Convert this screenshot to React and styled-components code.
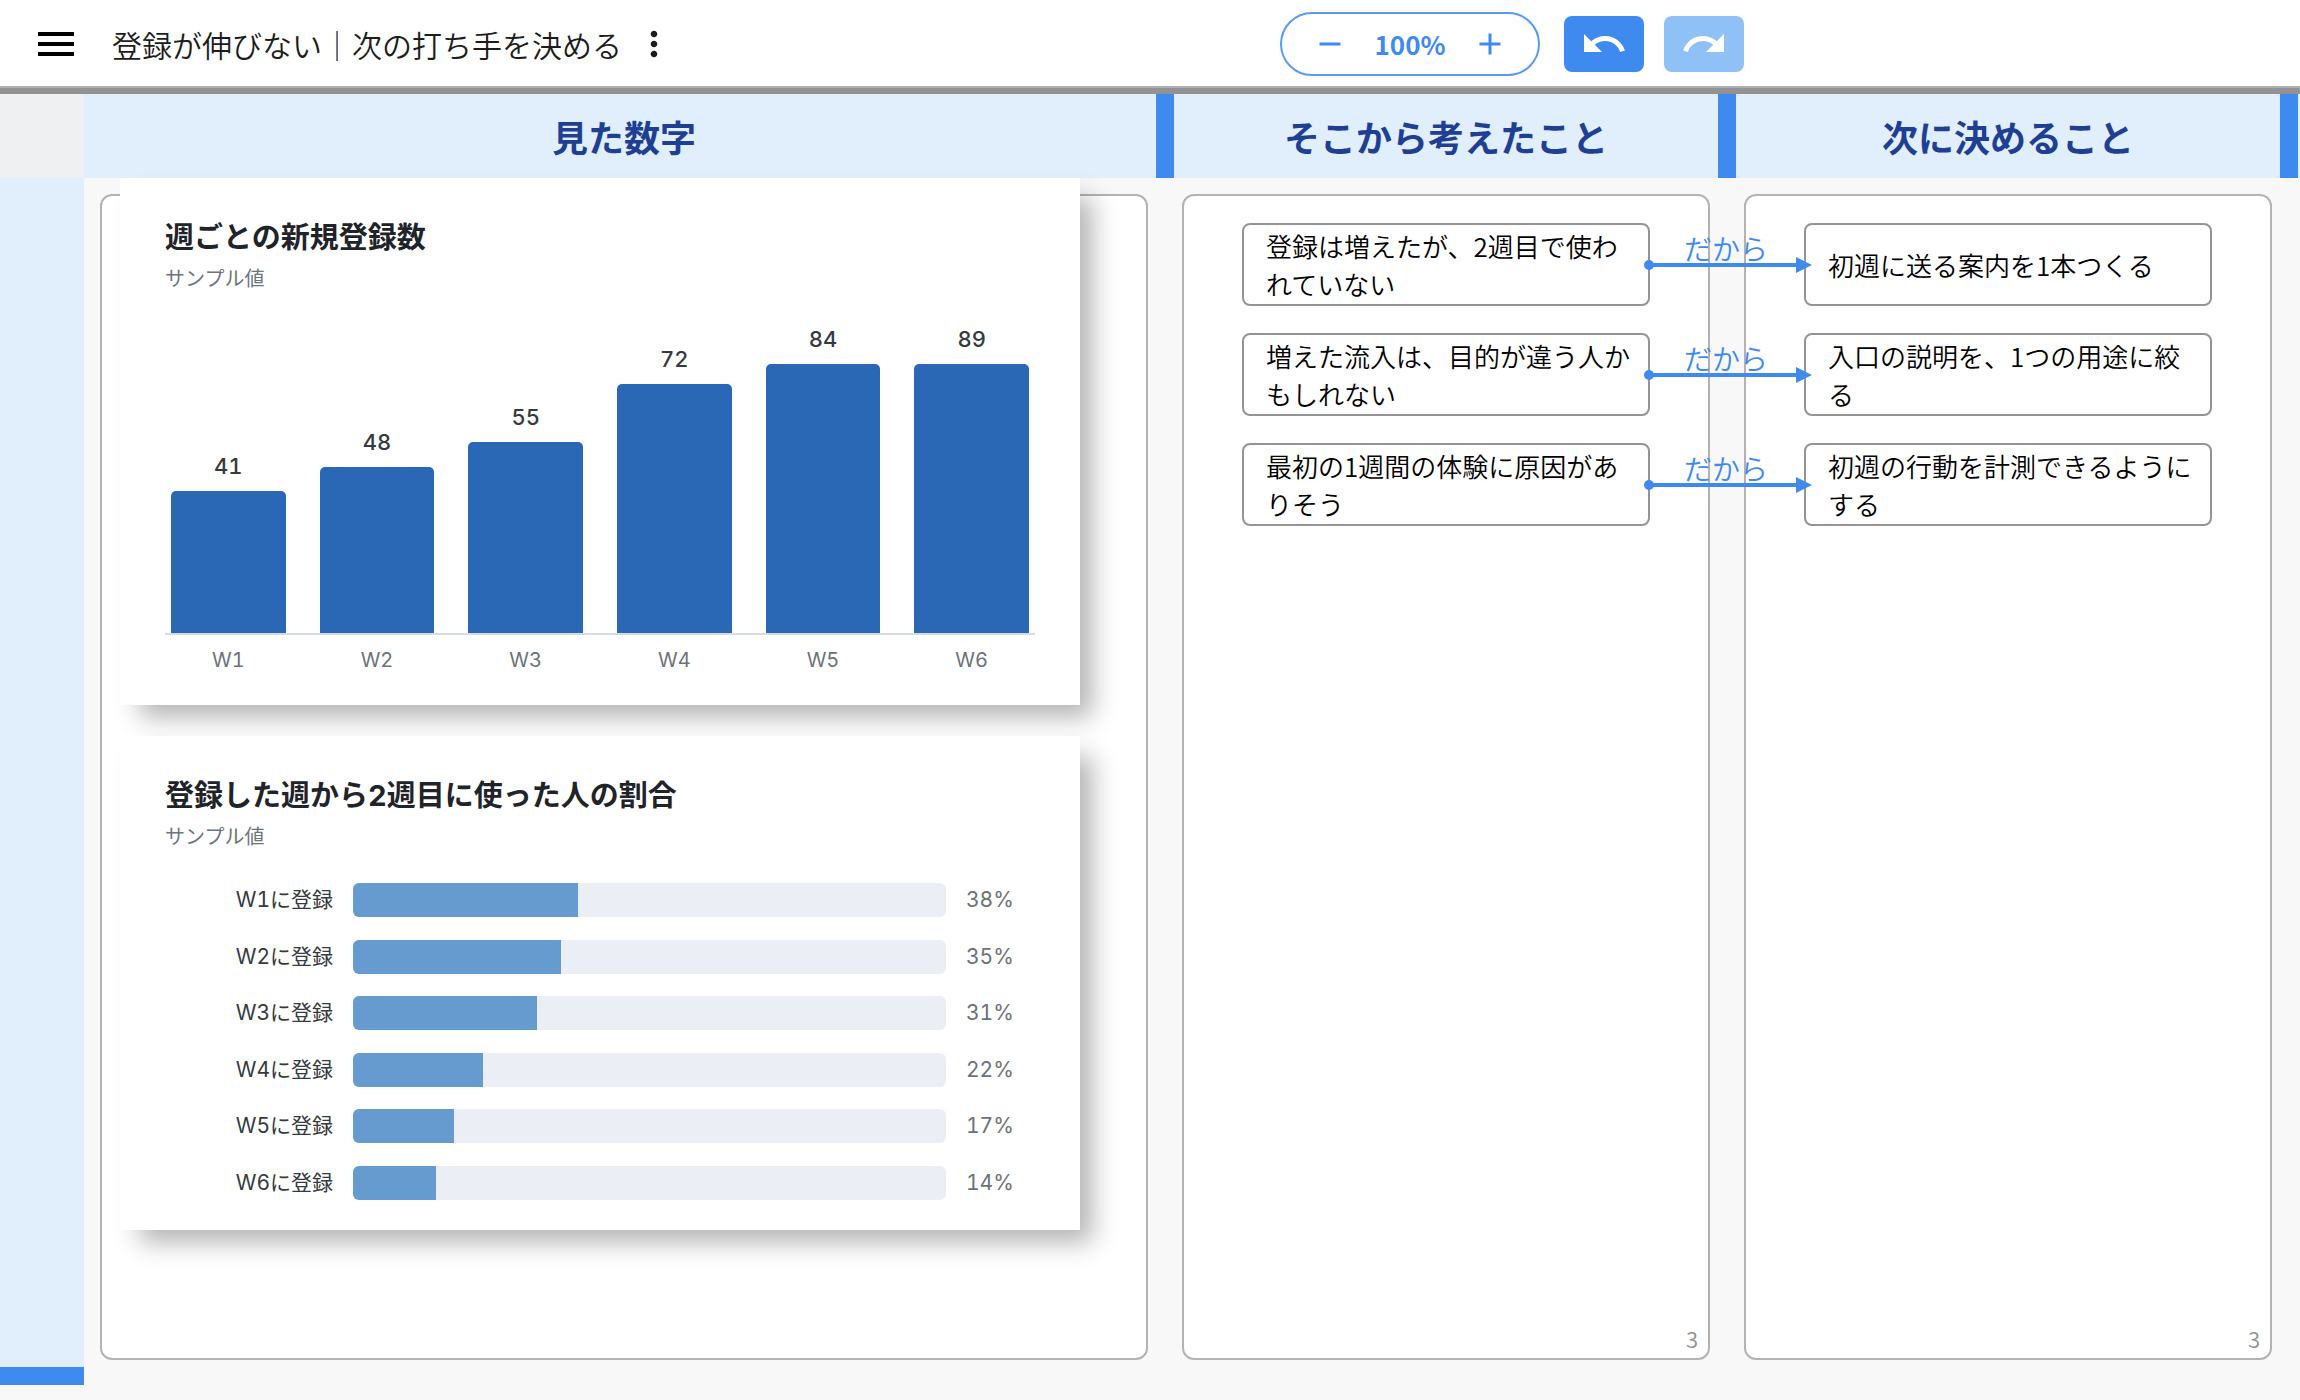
import React from 'react';
import styled, { createGlobalStyle } from 'styled-components';
import { MdAdd, MdMenu, MdMoreVert, MdRedo, MdRemove, MdUndo } from 'react-icons/md';

const GlobalStyle = createGlobalStyle`
  *, *::before, *::after {
    box-sizing: border-box;
  }

  body {
    margin: 0;
    background: #f8f8f8;
    color: #111;
    font-family: 'Noto Sans CJK JP', 'Noto Sans', sans-serif;
  }

  h1, h2, h3, p, ul {
    margin: 0;
    padding: 0;
  }

  ul {
    list-style: none;
  }

  button {
    padding: 0;
    border: 0;
    background: none;
    font: inherit;
    cursor: pointer;
  }
`;

const Page = styled.div`
  min-height: 100vh;
`;

const Toolbar = styled.header`
  display: flex;
  align-items: center;
  height: 94px;
  padding: 0 556px 0 32px;
  background: #fff;
  border-bottom: 6px solid #919291;
  box-shadow: inset 0 -2px #b0b0b0;
`;

const IconButton = styled.button`
  display: flex;
  color: ${props => props.$color || '#000'};
`;

const Title = styled.h1`
  margin: 0 12px 0 32px;
  color: #1c1c1c;
  font-size: 30px;
  font-weight: 350;
  line-height: 44px;
`;

const Tools = styled.div`
  display: flex;
  align-items: center;
  margin-left: auto;
`;

const Zoom = styled.div`
  display: flex;
  align-items: center;
  justify-content: space-between;
  width: 260px;
  height: 64px;
  margin-right: 24px;
  padding: 0 30px;
  border: 2px solid #579bed;
  border-radius: 32px;
  color: #3f8aee;
`;

const ZoomValue = styled.span`
  font-size: 26px;
  font-weight: 700;
  line-height: 38px;
`;

const HistoryButton = styled.button`
  display: flex;
  align-items: center;
  justify-content: center;
  width: 80px;
  height: 56px;
  border-radius: 8px;
  background: ${props => (props.disabled ? '#8fc0f6' : '#3f8aee')};
  color: #fff;

  & + & {
    margin-left: 20px;
  }
`;

const Board = styled.main`
  display: grid;
  grid-template-columns: 84px 1090fr 562fr 562fr 2px;
  grid-template-rows: 84px auto;
`;

const Corner = styled.div`
  background: #eff0f1;
`;

const ColumnHeader = styled.div`
  padding: 0 8px 0 ${props => (props.$first ? 16 : 8)}px;
  background: #e1effc;
  border-right: 18px solid #3f8aee;
  text-align: center;
`;

const ColumnTitle = styled.h2`
  color: #1f3f93;
  font-size: 36px;
  font-weight: 700;
  line-height: 84px;
`;

const HeaderEnd = styled.div`
  background: #e1effc;
`;

const RowHeader = styled.div`
  background: #e1effc;
  border-bottom: 18px solid #3f8aee;
`;

const Cell = styled.section`
  display: flex;
  padding: 16px 26px 25px ${props => (props.$first ? 16 : 8)}px;
`;

const Card = styled.div`
  flex: 1;
  display: flex;
  flex-direction: column;
  border: 2px solid #b3b3b3;
  border-radius: 12px;
  background: #fff;
`;

const Charts = styled.div`
  display: flex;
  flex-direction: column;
  gap: 31px;
  margin: -18px 66px 128px 18px;
`;

const Chart = styled.article`
  padding: 38px 45px 30px;
  background: #fff;
  box-shadow: 16px 16px 24px -4px rgba(0, 0, 0, 0.3);
  font-family: Inter, 'Noto Sans CJK JP', sans-serif;
  font-variant-numeric: tabular-nums;
`;

const ChartTitle = styled.h3`
  color: #1f2429;
  font-size: 29px;
  font-weight: 700;
  line-height: 44px;
`;

const ChartNote = styled.p`
  color: #6b7580;
  font-size: 20px;
  line-height: 38px;
`;

const Bars = styled.div`
  display: grid;
  grid-template-columns: repeat(6, 1fr);
  align-items: end;
  gap: 34px;
  height: 337px;
  padding: 0 6px;
  border-bottom: 2px solid #d5dbe3;
`;

const BarColumn = styled.div`
  display: flex;
  flex-direction: column;
  align-items: center;
`;

const BarValue = styled.span`
  margin-bottom: 10px;
  color: #343a40;
  font-size: 22px;
  font-weight: 500;
  line-height: 30px;
`;

const Bar = styled.div`
  width: 100%;
  border-radius: 5px 5px 0 0;
  background: #2a67b5;
`;

const BarLabels = styled.div`
  display: grid;
  grid-template-columns: repeat(6, 1fr);
  gap: 34px;
  padding: 10px 6px 0;
  color: #6b7278;
  font-size: 20px;
  line-height: 30px;
  text-align: center;
`;

const Rates = styled.ul`
  display: flex;
  flex-direction: column;
  justify-content: space-between;
  height: 317px;
  margin-top: 27px;
`;

const Rate = styled.li`
  display: grid;
  grid-template-columns: 168px 1fr 69px;
  align-items: center;
  column-gap: 20px;
  height: 34px;
  font-size: 21px;
  line-height: 34px;
`;

const RateLabel = styled.span`
  color: #343a40;
  text-align: right;
`;

const Track = styled.div`
  height: 34px;
  border-radius: 6px;
  background: #ebeef5;
  overflow: hidden;
`;

const Fill = styled.div`
  height: 100%;
  background: #659bcf;
`;

const RateValue = styled.span`
  color: #6b7278;
`;

const Notes = styled.ul`
  display: flex;
  flex-direction: column;
  flex: 1;
  gap: 27px;
  padding: 27px 58px 0;
`;

const Note = styled.li`
  position: relative;
  display: flex;
  align-items: center;
  height: 83px;
  padding: 0 14px 0 22px;
  border: 2px solid #949494;
  border-radius: 8px;
  color: #000;
  font-size: 26px;
  font-weight: 350;
  line-height: 38px;
`;

const Link = styled.div`
  position: absolute;
  left: 100%;
  bottom: 30px;
  z-index: 1;
  width: 156px;
  color: #3f8aee;
  font-size: 28px;
  line-height: 32px;
  text-align: center;
`;

const Arrow = styled.svg`
  display: block;
  width: 166px;
  height: 18px;
  margin-top: -8px;
  overflow: visible;
`;

const Count = styled.p`
  padding: 0 10px 2px;
  color: #909090;
  font-size: 22px;
  font-weight: 350;
  line-height: 36px;
  text-align: right;
`;

const signups = [
  { week: 'W1', value: 41 },
  { week: 'W2', value: 48 },
  { week: 'W3', value: 55 },
  { week: 'W4', value: 72 },
  { week: 'W5', value: 84 },
  { week: 'W6', value: 89 },
];

const rates = [38, 35, 31, 22, 17, 14];

const thoughts = [
  '登録は増えたが、2週目で使われていない',
  '増えた流入は、目的が違う人かもしれない',
  '最初の1週間の体験に原因がありそう',
];

const decisions = [
  '初週に送る案内を1本つくる',
  '入口の説明を、1つの用途に絞る',
  '初週の行動を計測できるようにする',
];

const barHeight = value => Math.min(Math.round(value * 3.465), 269);

const SignupChart = () => (
  <Chart>
    <ChartTitle>週ごとの新規登録数</ChartTitle>
    <ChartNote>サンプル値</ChartNote>
    <Bars>
      {signups.map(({ week, value }) => (
        <BarColumn key={week}>
          <BarValue>{value}</BarValue>
          <Bar style={{ height: barHeight(value) }} />
        </BarColumn>
      ))}
    </Bars>
    <BarLabels>
      {signups.map(({ week }) => (
        <span key={week}>{week}</span>
      ))}
    </BarLabels>
  </Chart>
);

const RateChart = () => (
  <Chart>
    <ChartTitle>登録した週から2週目に使った人の割合</ChartTitle>
    <ChartNote>サンプル値</ChartNote>
    <Rates>
      {rates.map((rate, i) => (
        <Rate key={rate}>
          <RateLabel>{`W${i + 1}に登録`}</RateLabel>
          <Track>
            <Fill style={{ width: `${rate}%` }} />
          </Track>
          <RateValue>{`${rate}%`}</RateValue>
        </Rate>
      ))}
    </Rates>
  </Chart>
);

const NoteLink = () => (
  <Link>
    だから
    <Arrow viewBox="0 0 166 18" aria-hidden="true">
      <circle cx="1" cy="9" r="5" fill="#3f8aee" />
      <path d="M1 9H150" stroke="#3f8aee" strokeWidth="4" />
      <path d="M148 1L164 9L148 17Z" fill="#3f8aee" />
    </Arrow>
  </Link>
);

const NoteCard = ({ items, linked }) => (
  <Card>
    <Notes>
      {items.map(text => (
        <Note key={text}>
          {text}
          {linked && <NoteLink />}
        </Note>
      ))}
    </Notes>
    <Count>{items.length}</Count>
  </Card>
);

const App = () => (
  <Page>
    <GlobalStyle />
    <Toolbar>
      <IconButton type="button" aria-label="メニュー">
        <MdMenu size={48} />
      </IconButton>
      <Title>登録が伸びない｜次の打ち手を決める</Title>
      <IconButton type="button" aria-label="その他" $color="#1c1c1c">
        <MdMoreVert size={40} />
      </IconButton>
      <Tools>
        <Zoom>
          <IconButton type="button" aria-label="縮小" $color="#3f8aee">
            <MdRemove size={36} />
          </IconButton>
          <ZoomValue>100%</ZoomValue>
          <IconButton type="button" aria-label="拡大" $color="#3f8aee">
            <MdAdd size={36} />
          </IconButton>
        </Zoom>
        <HistoryButton type="button" aria-label="元に戻す">
          <MdUndo size={48} />
        </HistoryButton>
        <HistoryButton type="button" aria-label="やり直す" disabled>
          <MdRedo size={48} />
        </HistoryButton>
      </Tools>
    </Toolbar>
    <Board>
      <Corner />
      <ColumnHeader $first>
        <ColumnTitle>見た数字</ColumnTitle>
      </ColumnHeader>
      <ColumnHeader>
        <ColumnTitle>そこから考えたこと</ColumnTitle>
      </ColumnHeader>
      <ColumnHeader>
        <ColumnTitle>次に決めること</ColumnTitle>
      </ColumnHeader>
      <HeaderEnd />
      <RowHeader />
      <Cell $first>
        <Card>
          <Charts>
            <SignupChart />
            <RateChart />
          </Charts>
        </Card>
      </Cell>
      <Cell>
        <NoteCard items={thoughts} linked />
      </Cell>
      <Cell>
        <NoteCard items={decisions} />
      </Cell>
    </Board>
  </Page>
);

export default App;
